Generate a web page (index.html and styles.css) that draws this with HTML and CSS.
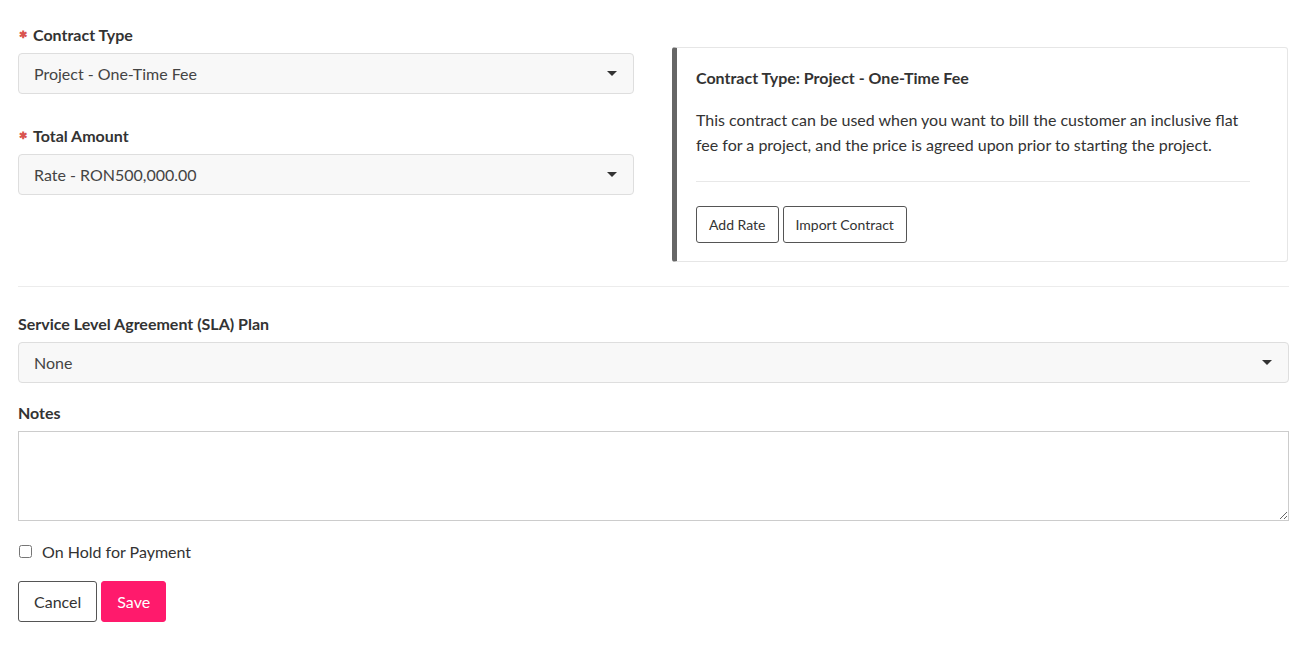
FILE: index.html
```html
<!DOCTYPE html>
<html>
<head>
<meta charset="utf-8">
<link rel="stylesheet" href="styles.css">
</head>
<body>
<div class="page">
  <div class="top">
    <div class="col-left">
      <div class="field">
        <label class="label"><span class="req">&#x2731;</span>Contract Type</label>
        <div class="select"><span>Project - One-Time Fee</span><span class="caret"></span></div>
      </div>
      <div class="field">
        <label class="label"><span class="req">&#x2731;</span>Total Amount</label>
        <div class="select"><span>Rate - RON500,000.00</span><span class="caret"></span></div>
      </div>
    </div>
    <div class="panel">
      <div class="panel-title">Contract Type: Project - One-Time Fee</div>
      <p class="panel-text">This contract can be used when you want to bill the customer an inclusive flat fee for a project, and the price is agreed upon prior to starting the project.</p>
      <div class="panel-rule"></div>
      <div class="panel-actions">
        <button class="btn-sm">Add Rate</button>
        <button class="btn-sm">Import Contract</button>
      </div>
    </div>
  </div>
  <div class="divider"></div>
  <div class="field">
    <label class="label">Service Level Agreement (SLA) Plan</label>
    <div class="select"><span>None</span><span class="caret"></span></div>
  </div>
  <div class="field notes">
    <label class="label">Notes</label>
    <textarea class="textarea"></textarea>
  </div>
  <label class="check"><input type="checkbox"><span>On Hold for Payment</span></label>
  <div class="actions">
    <button class="btn btn-cancel">Cancel</button>
    <button class="btn btn-save">Save</button>
  </div>
</div>
</body>
</html>
```
FILE: styles.css
```css
* { box-sizing: border-box; }
html, body { margin: 0; padding: 0; background: #fff; }
body {
  font-family: "Lato", "Liberation Sans", sans-serif;
  font-size: 16px;
  color: #333;
}
.page { padding: 23px 23px 0 18px; }
.top {
  display: grid;
  grid-template-columns: 616px 616px;
  column-gap: 38px;
  align-items: start;
}
.label {
  display: flex; align-items: center;
  font-weight: 700; font-size: 16px; color: #333;
  height: 22px; margin-bottom: 8px;
}
.req { color: #d9534f; font-size: 10px; margin-right: 6px; margin-left: 1px; }
.select {
  height: 41px;
  display: flex; align-items: center; justify-content: space-between;
  padding: 0 15px;
  background: #f8f8f8;
  border: 1px solid #dedede;
  border-radius: 4px;
  color: #444;
  margin-bottom: 18px;
}
.col-left .select { margin-bottom: 30px; }
.caret {
  width: 0; height: 0;
  border-left: 5px solid transparent;
  border-right: 5px solid transparent;
  border-top: 5px solid #333;
  margin-right: 1px;
}
.panel {
  margin-top: 24px;
  border: 1px solid #e6e6e6;
  border-left: 5px solid #666;
  border-radius: 3px;
  padding: 19px 37px 18px 19px;
}
.panel-title { font-weight: 700; font-size: 16px; line-height: 22px; }
.panel-text { margin: 18px 0 0; line-height: 25px; font-size: 16px; color: #333; }
.panel-rule { height: 1px; background: #e8e8e8; margin: 24px 0 24px; }
.panel-actions { display: flex; gap: 4px; }
.btn-sm {
  height: 37px;
  padding: 0 12px;
  background: #fff;
  border: 1px solid #555;
  border-radius: 3px;
  font-family: inherit; font-size: 14px; color: #333;
}
.divider { height: 1px; background: #ececec; margin: 24px 0 25px; }
.textarea {
  display: block; width: 100%; height: 90px;
  border: 1px solid #ccc; border-radius: 0;
  resize: vertical; font-family: inherit; margin: 0;
}
.check {
  display: flex; align-items: center; gap: 10px;
  margin-top: 20px; height: 20px; font-size: 16px; color: #333;
}
.check input { margin: 0 0 0 1px; width: 13px; height: 13px; }
.actions { display: flex; gap: 4px; margin-top: 20px; }
.btn {
  height: 41px; padding: 0 15px;
  border-radius: 3px; font-family: inherit; font-size: 16px;
}
.btn-cancel { background: #fff; border: 1px solid #555; color: #333; }
.btn-save { background: #ff1a6c; border: 1px solid #ff1a6c; color: #fff; }
```
